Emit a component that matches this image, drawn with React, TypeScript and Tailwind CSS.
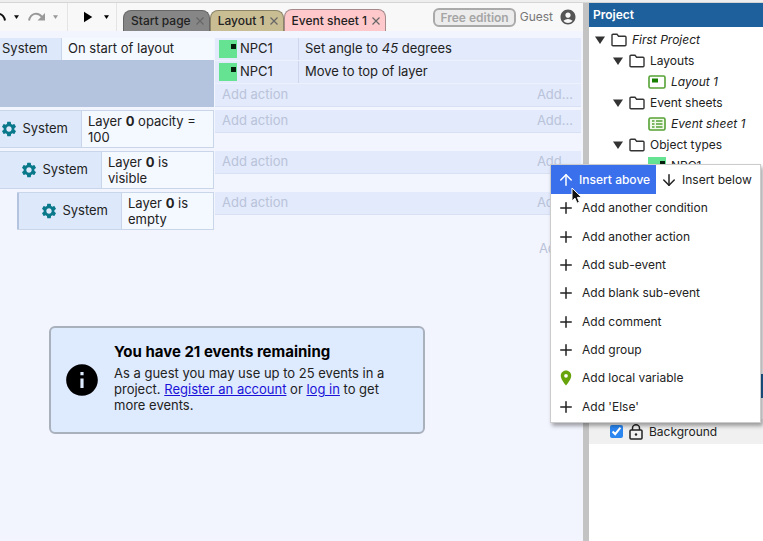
import React from 'react';
import { clsx } from 'clsx';
import { FiArrowDown, FiArrowUp, FiPlus } from 'react-icons/fi';
import { MdAccountCircle, MdInfo, MdLocationOn, MdPlayArrow, MdSettings } from 'react-icons/md';

const Caret = ({ className }: { className?: string }) => (
  <svg viewBox="0 0 10 8" className={clsx('shrink-0', className)} fill="currentColor">
    <path d="M0 0.5h10L5 8z" />
  </svg>
);

const RedoIcon = ({ className }: { className?: string }) => (
  <svg viewBox="0 0 18 12" className={clsx('h-3 w-[18px] shrink-0', className)}>
    <path d="M1 9.500C2.500 2 10 0.500 14 6" fill="none" stroke="currentColor" strokeWidth="2" />
    <path d="M17 2v7.500H9.500z" fill="currentColor" />
  </svg>
);

const FolderIcon = () => (
  <svg viewBox="0 0 16 14" className="h-3.5 w-4 shrink-0" fill="none" stroke="#333" strokeWidth="1.4">
    <path d="M1 2.200Q1 1.200 2 1.200h4l1.600 2H14q1 0 1 1v7.600q0 1-1 1H2q-1 0-1-1z" />
  </svg>
);

const LayoutIcon = () => (
  <svg viewBox="0 0 18 14" className="h-3.5 w-[18px] shrink-0">
    <rect x="1" y="1" width="16" height="12" rx="1.500" fill="#fff" stroke="#55a235" strokeWidth="1.600" />
    <rect x="4" y="3.500" width="6" height="4" fill="#188000" />
  </svg>
);

const SheetIcon = () => (
  <svg viewBox="0 0 18 14" className="h-3.5 w-[18px] shrink-0" stroke="#55a235">
    <rect x="1" y="1" width="16" height="12" rx="1.500" fill="#f1fae9" strokeWidth="1.600" />
    <path d="M4 4h2.500M4 7h2.500M4 10h2.500M8 4h6.500M8 7h6.500M8 10h6.500" strokeWidth="1.500" />
  </svg>
);

const NpcIcon = () => (
  <svg viewBox="0 0 18 18" className="size-[18px] shrink-0">
    <rect width="18" height="18" fill="#66e392" />
    <rect x="12" y="4" width="5" height="5" fill="#06200e" />
  </svg>
);

const LockIcon = () => (
  <svg viewBox="0 0 14 16" className="h-4 w-3.5 shrink-0" fill="none" stroke="#222" strokeWidth="1.500">
    <rect x="1" y="6" width="12" height="9" rx="1" />
    <path d="M3.500 6V4a3.500 3.200 0 0 1 7 0v2" />
    <circle cx="7" cy="10.500" r="1.200" fill="#222" stroke="none" />
  </svg>
);

const Cursor = () => (
  <svg viewBox="0 0 12 18" className="absolute top-[22px] left-5 h-[18px] w-3" fill="#111" stroke="#fff">
    <path d="M1 1v13l3-2.800 2 5 2.400-1-2-4.800h4.200z" />
  </svg>
);

type TabProps = { label: string; className: string };

const Tab = ({ label, className }: TabProps) => (
  <button
    type="button"
    className={clsx(
      'flex items-center gap-[5px] rounded-t-lg border border-b-0 pr-[5px] pl-[7px] font-medium whitespace-nowrap',
      className,
    )}
  >
    {label}
    <svg viewBox="0 0 8 8" className="size-2" stroke="#666" strokeWidth="1.200">
      <path d="M0.500 0.500l7 7M7.500 0.500l-7 7" />
    </svg>
  </button>
);

const Toolbar = () => (
  <header className="flex h-7 items-stretch bg-[#f8f8f8]">
    <div className="flex w-[68px] items-center border-r border-[#e4e4e4] text-[#111]">
      <button type="button" aria-label="Undo" className="-ml-3">
        <RedoIcon className="-scale-x-100" />
      </button>
      <Caret className="ml-2 h-1.5 w-[5px]" />
      <button type="button" aria-label="Redo" className="ml-[9px] text-[#999]">
        <RedoIcon />
      </button>
      <Caret className="ml-[7px] h-1.5 w-[5px] text-[#999]" />
    </div>
    <div className="flex w-[49px] items-center border-r border-[#e4e4e4] pl-2.5 text-black">
      <button type="button" aria-label="Preview">
        <MdPlayArrow className="size-[18px]" />
      </button>
      <Caret className="ml-2 h-1.5 w-[5px]" />
    </div>
    <nav className="flex items-end pl-1.5 text-xs">
      <Tab label="Start page" className="h-[21px] border-[#666] bg-[#868686]" />
      <Tab label="Layout 1" className="h-[21px] border-[#8b8467] bg-[#c9bd94]" />
      <Tab label="Event sheet 1" className="h-[22px] border-[#a58a8c] bg-[#ffc9cc]" />
    </nav>
    <div className="ml-auto flex items-center gap-1 pr-1.5 text-xs text-[#777]">
      <span className="rounded-md border-2 border-[#aaa] bg-[#ececec] px-[5px] leading-[15px] font-semibold whitespace-nowrap text-[#a5a5a5]">
        Free edition
      </span>
      <span>Guest</span>
      <MdAccountCircle className="ml-0.5 size-[18px] text-[#555]" />
    </div>
  </header>
);

const AddAction = () => (
  <div className="flex h-[23px] items-center justify-between border-b border-[#d8e0f4] bg-[#e3eafb] pr-2 pl-[7px] text-[#b9c3da]">
    <button type="button">Add action</button>
    <button type="button">Add...</button>
  </div>
);

const Action = ({ children }: { children: React.ReactNode }) => (
  <div className="flex h-[23px] items-center border-b border-[#edf1fd] bg-[#e3eafb] pl-1">
    <NpcIcon />
    <span className="ml-[3px] w-[58px]">NPC1</span>
    <span className="flex h-full items-center border-l border-[#cdd6ec] pl-1.5">{children}</span>
  </div>
);

type ConditionProps = { indent: string; width: string; children: React.ReactNode };

const Condition = ({ indent, width, children }: ConditionProps) => (
  <div className={clsx('w-[214px] shrink-0', indent)}>
    <div className="flex h-[38px] border border-l-0 border-[#c9d6ea]">
      <div className={clsx('flex shrink-0 items-center justify-end gap-1 bg-[#dde9fa] pr-[13px]', width)}>
        <MdSettings className="size-[18px] text-[#08788a]" />
        System
      </div>
      <div className="flex flex-1 items-center border-l border-[#c9d6ea] bg-[#f4f8ff] pl-1.5 leading-4">
        <p>{children}</p>
      </div>
    </div>
  </div>
);

const EventSheet = () => (
  <section className="flex flex-col gap-[3px] pt-[7px] pr-0.5">
    <div className="flex gap-px">
      <div className="w-[214px] shrink-0 bg-[#b5c4de]">
        <div className="flex h-[22px]">
          <div className="flex w-[61px] items-center bg-[#dde9fa] pl-0.5">System</div>
          <div className="flex flex-1 items-center border-l border-[#c9d6ea] bg-[#f4f8ff] pl-1.5">
            On start of layout
          </div>
        </div>
      </div>
      <div className="flex-1">
        <Action>
          <span>
            Set angle to <i>45</i> degrees
          </span>
        </Action>
        <Action>Move to top of layer</Action>
        <AddAction />
      </div>
    </div>
    <div className="flex gap-px">
      <Condition indent="pl-0" width="w-[81px]">
        Layer <b>0</b> opacity = 100
      </Condition>
      <div className="flex-1">
        <AddAction />
      </div>
    </div>
    <div className="flex gap-px">
      <Condition indent="pl-0" width="w-[101px]">
        Layer <b>0</b> is
        <br />
        visible
      </Condition>
      <div className="flex-1">
        <AddAction />
      </div>
    </div>
    <div className="flex gap-px">
      <Condition indent="pl-[17px]" width="w-[104px] border-l-2 border-[#b5c4de]">
        Layer <b>0</b> is
        <br />
        empty
      </Condition>
      <div className="flex-1">
        <AddAction />
      </div>
    </div>
    <div className="flex justify-end pt-1.5 pr-1.5 text-[#b9c3da]">
      <button type="button">Add...</button>
    </div>
  </section>
);

const EventsRemaining = () => (
  <section className="mt-[67px] ml-[49px] flex h-[108px] w-[376px] items-center rounded-md border-2 border-[#a9b1bd] bg-[#deeafd] pl-3">
    <MdInfo className="size-[38px] shrink-0 text-black" />
    <div className="ml-[13px] pb-1">
      <h2 className="text-[15px] leading-5 font-bold text-black">You have 21 events remaining</h2>
      <p className="mt-[3px] w-[280px] leading-4">
        As a guest you may use up to 25 events in a project.{' '}
        <a href="#register" className="text-[#1a12d8] underline">
          Register an account
        </a>{' '}
        or{' '}
        <a href="#login" className="text-[#1a12d8] underline">
          log in
        </a>{' '}
        to get more events.
      </p>
    </div>
  </section>
);

type TreeRowProps = { depth: string; open?: boolean; icon: React.ReactNode; children: React.ReactNode };

const TreeRow = ({ depth, open, icon, children }: TreeRowProps) => (
  <li className={clsx('flex h-[21px] items-center whitespace-nowrap', depth)}>
    {open && <Caret className="mr-1.5 h-2 w-2.5 text-[#333]" />}
    {icon}
    <span className="ml-[5px]">{children}</span>
  </li>
);

const ProjectPanel = () => (
  <aside className="flex w-[174px] shrink-0 flex-col bg-white text-xs">
    <h2 className="flex h-6 shrink-0 items-center bg-[#1e609c] pl-1 font-semibold text-white">Project</h2>
    <ul className="h-[347px] pt-0.5">
      <TreeRow depth="pl-1.5" open icon={<FolderIcon />}>
        <i>First Project</i>
      </TreeRow>
      <TreeRow depth="pl-6" open icon={<FolderIcon />}>
        Layouts
      </TreeRow>
      <TreeRow depth="pl-[59px]" icon={<LayoutIcon />}>
        <i>Layout 1</i>
      </TreeRow>
      <TreeRow depth="pl-6" open icon={<FolderIcon />}>
        Event sheets
      </TreeRow>
      <TreeRow depth="pl-[59px]" icon={<SheetIcon />}>
        <i>Event sheet 1</i>
      </TreeRow>
      <TreeRow depth="pl-6" open icon={<FolderIcon />}>
        Object types
      </TreeRow>
      <TreeRow depth="pl-[59px]" icon={<NpcIcon />}>
        NPC1
      </TreeRow>
    </ul>
    <div className="h-6 bg-[#1e609c]" />
    <div className="mt-[21px] flex h-[25px] items-center bg-[#f0f0f0] pl-[21px]">
      <label htmlFor="background" className="flex items-center gap-1.5">
        <input id="background" type="checkbox" defaultChecked className="size-[13px] accent-[#2b86f0]" />
        <LockIcon />
        <span>Background</span>
      </label>
    </div>
  </aside>
);

const menuItems = [
  'Add another condition',
  'Add another action',
  'Add sub-event',
  'Add blank sub-event',
  'Add comment',
  'Add group',
  'Add local variable',
  "Add 'Else'",
];

const ContextMenu = () => (
  <div className="absolute top-[164px] right-0.5 w-[211px] border border-[#ccc] bg-white pb-px text-xs shadow-[2px_3px_4px_rgba(0,0,0,0.35)]">
    <div className="flex h-[29px]">
      <button type="button" className="flex w-[105px] items-center gap-1 bg-[#3a70ec] pl-1.5 font-medium whitespace-nowrap text-white">
        <FiArrowUp className="size-[18px]" />
        Insert above
      </button>
      <button type="button" className="flex flex-1 items-center gap-1 pl-1 whitespace-nowrap">
        <FiArrowDown className="size-[18px]" />
        Insert below
      </button>
    </div>
    <ul className="grid h-[227px]">
      {menuItems.map((item) => (
        <li key={item}>
          <button type="button" className="flex h-full w-full items-center gap-[7px] pl-1.5">
            {item === 'Add local variable' ? (
              <MdLocationOn className="size-[18px] text-[#67a30b]" />
            ) : (
              <FiPlus className="size-[18px]" />
            )}
            {item}
          </button>
        </li>
      ))}
    </ul>
    <Cursor />
  </div>
);

const App = () => {
  return (
    <div className="relative flex min-h-screen flex-col overflow-hidden bg-[#f3f5fe] font-[Inter,sans-serif] text-[13px] text-[#222]">
      <div className="h-[3px] border-b border-[#d5d5d5] bg-[#eee]" />
      <div className="flex flex-1">
        <main className="min-w-0 flex-1">
          <Toolbar />
          <EventSheet />
          <EventsRemaining />
        </main>
        <div className="w-1.5 shrink-0 bg-[#c3c3c3]" />
        <ProjectPanel />
      </div>
      <ContextMenu />
    </div>
  );
};

export default App;
